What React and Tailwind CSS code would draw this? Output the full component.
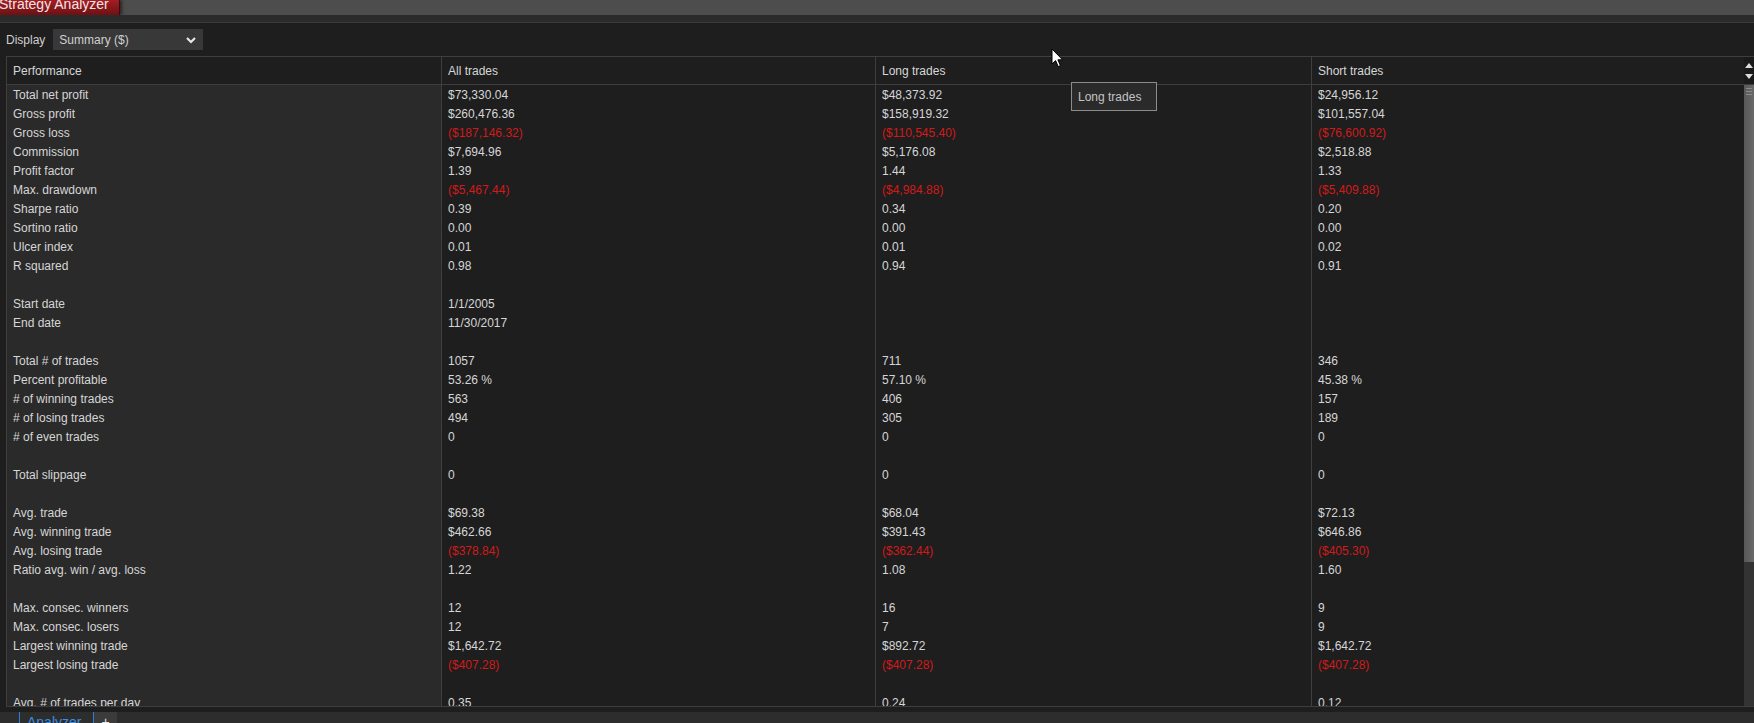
import React from "react";

const rows = [
  ["Total net profit", "$73,330.04", "$48,373.92", "$24,956.12"],
  ["Gross profit", "$260,476.36", "$158,919.32", "$101,557.04"],
  ["Gross loss", "($187,146.32)", "($110,545.40)", "($76,600.92)", true],
  ["Commission", "$7,694.96", "$5,176.08", "$2,518.88"],
  ["Profit factor", "1.39", "1.44", "1.33"],
  ["Max. drawdown", "($5,467.44)", "($4,984.88)", "($5,409.88)", true],
  ["Sharpe ratio", "0.39", "0.34", "0.20"],
  ["Sortino ratio", "0.00", "0.00", "0.00"],
  ["Ulcer index", "0.01", "0.01", "0.02"],
  ["R squared", "0.98", "0.94", "0.91"],
  null,
  ["Start date", "1/1/2005", "", ""],
  ["End date", "11/30/2017", "", ""],
  null,
  ["Total # of trades", "1057", "711", "346"],
  ["Percent profitable", "53.26 %", "57.10 %", "45.38 %"],
  ["# of winning trades", "563", "406", "157"],
  ["# of losing trades", "494", "305", "189"],
  ["# of even trades", "0", "0", "0"],
  null,
  ["Total slippage", "0", "0", "0"],
  null,
  ["Avg. trade", "$69.38", "$68.04", "$72.13"],
  ["Avg. winning trade", "$462.66", "$391.43", "$646.86"],
  ["Avg. losing trade", "($378.84)", "($362.44)", "($405.30)", true],
  ["Ratio avg. win / avg. loss", "1.22", "1.08", "1.60"],
  null,
  ["Max. consec. winners", "12", "16", "9"],
  ["Max. consec. losers", "12", "7", "9"],
  ["Largest winning trade", "$1,642.72", "$892.72", "$1,642.72"],
  ["Largest losing trade", "($407.28)", "($407.28)", "($407.28)", true],
  null,
  ["Avg. # of trades per day", "0.35", "0.24", "0.12"],
];

const grid = "grid grid-cols-[435px_434px_436px_1fr]";

function Row({ r }) {
  const cells = r || ["", "", "", ""];
  const valueColor = r && r[4] ? "text-[#d11a1a]" : "text-[#d6d6d6]";
  return (
    <div className={`${grid} h-[19px] shrink-0 leading-[21px]`}>
      <div className="bg-[#2a2a2a] border-r border-[#3e3e3e] px-[6px] whitespace-nowrap">{cells[0]}</div>
      <div className={`border-r border-[#3e3e3e] px-[6px] ${valueColor}`}>{cells[1]}</div>
      <div className={`border-r border-[#3e3e3e] px-[6px] ${valueColor}`}>{cells[2]}</div>
      <div className={`px-[6px] ${valueColor}`}>{cells[3]}</div>
    </div>
  );
}

export default function App() {
  return (
    <div className="relative w-[1754px] h-[723px] overflow-hidden bg-[#1e1e1e] flex flex-col font-['Liberation_Sans',Arial,sans-serif] text-[12px] text-[#d6d6d6]">
      {/* title bar */}
      <div className="h-[15px] shrink-0 bg-[#4d4d4d] flex">
        <div className="w-[120px] h-full overflow-hidden bg-gradient-to-b from-[#a31d24] to-[#6d1114] border-r border-[#3a0a0c] shadow-[2px_0_3px_rgba(0,0,0,0.5)]">
          <div className="-mt-[4px] -ml-[1px] text-[14px] leading-[17px] text-[#f3e4e4] whitespace-nowrap">Strategy Analyzer</div>
        </div>
      </div>
      <div className="h-[8px] shrink-0 bg-[#2b2b2b] border-b border-[#3a3a3a]" />

      {/* display selector */}
      <div className="h-[33px] shrink-0 flex items-center pl-[6px] gap-[8px]">
        <span className="text-[#cfcfcf]">Display</span>
        <div className="w-[150px] h-[21px] bg-[#383838] flex items-center justify-between pl-[6px] pr-[7px] text-[#d0d0d0]">
          <span>Summary ($)</span>
          <svg width="10" height="8" viewBox="0 0 10 8">
            <polyline points="1,2 5,6 9,2" fill="none" stroke="#e6e6e6" strokeWidth="2.2" />
          </svg>
        </div>
      </div>

      {/* table */}
      <div className="flex-1 min-h-0 ml-[6px] flex border-t border-b border-l border-[#3e3e3e]">
        <div className="flex-1 min-w-0 flex flex-col">
          <div className={`${grid} h-[28px] shrink-0 border-b border-[#3e3e3e] leading-[29px]`}>
            <div className="border-r border-[#3e3e3e] px-[6px]">Performance</div>
            <div className="border-r border-[#3e3e3e] px-[6px]">All trades</div>
            <div className="border-r border-[#3e3e3e] px-[6px]">Long trades</div>
            <div className="px-[6px]">Short trades</div>
          </div>
          <div className="flex-1 min-h-0 overflow-hidden flex flex-col">
            {rows.map((r, i) => (
              <Row key={i} r={r} />
            ))}
          </div>
        </div>

        {/* scrollbar */}
        <div className="w-[10px] shrink-0 flex flex-col">
          <div className="h-[28px] shrink-0 bg-[#1a1a1a] border-b border-[#3e3e3e] flex flex-col items-center justify-center gap-[6px]">
            <svg width="8" height="5" viewBox="0 0 8 5"><polygon points="0,5 4,0 8,5" fill="#dcdcdc" /></svg>
            <svg width="8" height="5" viewBox="0 0 8 5"><polygon points="0,0 8,0 4,5" fill="#dcdcdc" /></svg>
          </div>
          <div className="h-[477px] shrink-0 bg-gradient-to-r from-[#585858] to-[#6a6a6a] flex flex-col gap-[2px] pt-[3px] px-[2px]">
            <div className="h-px bg-[#8a8a8a]" />
            <div className="h-px bg-[#8a8a8a]" />
            <div className="h-px bg-[#8a8a8a]" />
          </div>
          <div className="flex-1 bg-[#333333]" />
        </div>
      </div>

      <div className="h-[5px] shrink-0" />

      {/* bottom tabs */}
      <div className="h-[11px] shrink-0 bg-[#2d2d2d] flex overflow-hidden">
        <div className="ml-[19px] w-[75px] h-full border-l border-r border-[#2b7fd4] pl-[7px] pt-[2px] text-[14px] leading-[17px] text-[#3a8ee0]">Analyzer</div>
        <div className="w-[23px] h-full bg-[#3b3b3b] flex justify-center pt-[2px] text-[14px] leading-[17px] text-[#e6e6e6]">+</div>
      </div>

      {/* tooltip */}
      <div className="absolute left-[1071px] top-[82px] w-[86px] h-[29px] border border-[#8c8c8c] bg-[#2a2a2a] flex items-center pl-[6px] text-[#c4c4c4]">
        Long trades
      </div>

      {/* mouse pointer */}
      <svg className="absolute left-[1051px] top-[48px]" width="13" height="20" viewBox="0 0 13 20">
        <path d="M1 1 L1 16 L4.6 12.6 L7.2 18.6 L9.4 17.6 L6.9 11.8 L11.6 11.8 Z" fill="#ffffff" stroke="#000000" strokeWidth="1" strokeLinejoin="round" />
      </svg>
    </div>
  );
}
